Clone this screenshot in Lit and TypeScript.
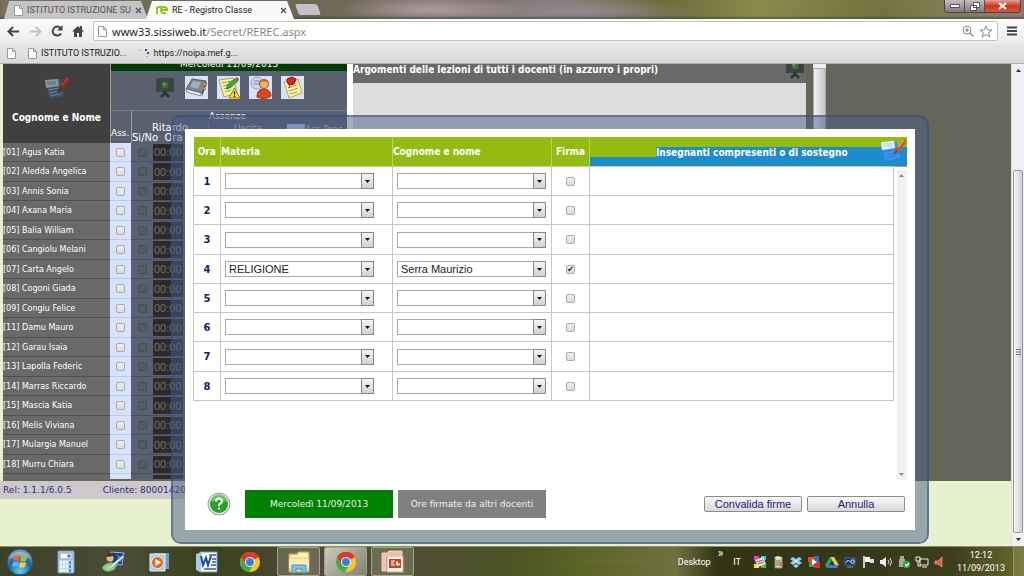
import { LitElement, html, css, svg, nothing } from "lit";
import { customElement } from "lit/decorators.js";

const students = [
  "[01] Agus Katia", "[02] Aledda Angelica", "[03] Annis Sonia", "[04] Axana Maria",
  "[05] Balia William", "[06] Cangiolu Melani", "[07] Carta Angelo", "[08] Cogoni Giada",
  "[09] Congiu Felice", "[11] Damu Mauro", "[12] Garau Isaia", "[13] Lapolla Federic",
  "[14] Marras Riccardo", "[15] Mascia Katia", "[16] Melis Viviana", "[17] Mulargia Manuel",
  "[18] Murru Chiara",
];

const hours = [1, 2, 3, 4, 5, 6, 7, 8].map((n) => ({
  n,
  subject: n === 4 ? "RELIGIONE" : "",
  teacher: n === 4 ? "Serra Maurizio" : "",
  signed: n === 4,
}));

const icon = (w: number, h: number, body: unknown, box = `0 0 ${w} ${h}`) =>
  html`<svg width=${w} height=${h} viewBox=${box} aria-hidden="true">${body}</svg>`;

const pageIcon = icon(9, 11, svg`<path d="M.5.5h5l3 3v7h-8z" fill="#fdfdfd" stroke="#999"/><path d="M5.500.5v3h3" fill="none" stroke="#999"/>`);
const closeIcon = icon(7, 7, svg`<path d="M1 1l5 5M6 1L1 6" stroke="#555" stroke-width="1.400"/>`);

const notePen = (blue: boolean) => icon(28, 26, svg`
  <path d="M2 5l16-2 3 17-14 3z" fill=${blue ? "#3b93f0" : "#3c5366"}/>
  <path d="M2 4l13-1 1 7-13 2z" fill=${blue ? "#eef4ff" : "#8797a3"}/>
  <path d="M4 6h9M4 8h9" stroke=${blue ? "#a8c8ee" : "#5d6f7c"}/>
  <path d="M5 14l11-2M6 17l11-2M7 20l10-2" stroke=${blue ? "#2a7de6" : "#6b8192"}/>
  <path d="M14 17l3-7L25 1l2 1-1 4-7 9z" fill=${blue ? "#c4582a" : "#842c1e"}/>
  <path d="M19 9l6-7" stroke=${blue ? "#f0a040" : "#b5482d"} stroke-width="1.500"/>
  <path d="M14 17l3-6 2 3z" fill=${blue ? "#4a5a86" : "#333c55"}/>`);

const boardIcon = (w = 18, h = 22) => icon(w, h, svg`
  <path d="M1 2h16v12H1z" fill="#34453c" stroke="#3b464b" stroke-width="2"/>
  <circle cx="9" cy="8" r="3.500" fill="#3f6d38"/><circle cx="8" cy="7" r="1.500" fill="#6b9559"/>
  <path d="M9 14v3M9 16l-4 4M9 16l4 4" stroke="#2d3235" stroke-width="2.500"/>`, "0 0 18 22");

const diary = icon(23, 23, svg`
  <path d="M7 3l14 2-4 12L1 13z" fill="#7c8488" stroke="#555b5f"/><path d="M8 5l8 1-3 7-8-2z" fill="#a3acb0"/>
  <path d="M1 13l15 4v3L2 16z" fill="#f3f3f3" stroke="#6b7175" stroke-width=".8"/><path d="M21 5l1 3-5 12v-3z" fill="#4b5053"/>
  <path d="M19 8l3 1M18 12l3 1" stroke="#d89430" stroke-width="2"/>`);
const noteWarn = icon(23, 23, svg`
  <path d="M2 4l14-2 4 15-13 4z" fill="#f6f2a5" stroke="#a7a466"/><path d="M5 7l10-2M6 10l9-2M7 13l7-2M8 16l6-2" stroke="#9b9c6c"/>
  <path d="M9 13l2-5 8-6 2 3-8 7z" fill="#3fa935" stroke="#24741f" stroke-width=".7"/><path d="M18 3l3 2 1-2-2-2z" fill="#d24a33"/>
  <path d="M17.500 12l5.500 10H12z" fill="#ffe32d" stroke="#a27a00"/><path d="M17.500 15.500v3M17.500 19.500v1.500" stroke="#222" stroke-width="1.500"/>`);
const person = icon(23, 23, svg`
  <circle cx="8" cy="7" r="6" fill="#cfd9f3" stroke="#8fa0cc"/><path d="M4 8h8M5 5h6" stroke="#6c83bd"/>
  <path d="M8 21c0-6 3-8 7-8s7 3 7 7c-3 3-10 3-14 1z" fill="#e2451b" stroke="#9c2c10"/>
  <circle cx="15" cy="8" r="4.500" fill="#f3b463" stroke="#a35a1b"/><path d="M10 8c0-6 10-7 10 0-2-3-7-4-10 0z" fill="#c06a24"/>`);
const pinNote = icon(23, 23, svg`
  <path d="M3 6l14-3 4 14-13 5z" fill="#fff0a3" stroke="#c2a64c"/><path d="M7 12l9-3M8 15l9-3M9 18l7-2" stroke="#a8975c"/>
  <path d="M6 3l5-2 4 2-2 5-5 1-2-3z" fill="#d8251d" stroke="#8f120e"/><path d="M9 8l-1 4" stroke="#555"/>`);

const chromeLogo = icon(22, 22, svg`
  <circle cx="11" cy="11" r="10" fill="#f6ca21"/>
  <path d="M11 11L2.300 6A10 10 0 0119.700 6z" fill="#dd3a2c"/><path d="M11 11L2.300 6A10 10 0 0010 21l5-8z" fill="#4aa84b"/>
  <path d="M11 6h8.700a10 10 0 00-17.400 0l4.500 7.500z" fill="#dd3a2c"/>
  <circle cx="11" cy="11" r="5" fill="#f4f4f4"/><circle cx="11" cy="11" r="3.900" fill="#3b7ee0"/>`);
const orb = icon(28, 28, svg`
  <defs><radialGradient id="orb" cx=".5" cy=".85" r=".9"><stop offset="0" stop-color="#5bd0f2"/><stop offset=".5" stop-color="#20639c"/><stop offset="1" stop-color="#93abbd"/></radialGradient></defs>
  <circle cx="14" cy="14" r="13" fill="url(#orb)" stroke="#274c66"/>
  <path d="M3 11a12 12 0 0122 0c-7-3-15-3-22 0z" fill="#fff" opacity=".35"/>
  <path d="M8 8c2-1 4-1 6 0l-1 5c-2-1-4-1-6 0z" fill="#ee6a2c"/><path d="M15 8c2 1 4 1 6 0l-1 5c-2 1-4 1-6 0z" fill="#8fc63d"/>
  <path d="M7 14c2-1 4-1 6 0l-1 5c-2-1-4-1-6 0z" fill="#54b4ea"/><path d="M14 14c2 1 4 1 6 0l-1 5c-2 1-4 1-6 0z" fill="#fccc3c"/>`);
const calc = icon(18, 24, svg`
  <rect x="1" y="1" width="16" height="22" rx="1" fill="#b9d7ec" stroke="#6e9bbb"/><rect x="3" y="3" width="12" height="6" fill="#f5fbff" stroke="#7fa4bd"/>
  <path d="M11 5h2v2h-2z" fill="none" stroke="#456"/>
  ${[0, 1, 2].map((r) => [0, 1, 2, 3].map((c) => svg`<rect x=${3 + c * 3} y=${11 + r * 4} width="2" height="3" fill=${c === 3 ? "#4b8fc4" : "#f2faff"}/>`))}`);
const journal = icon(24, 22, svg`
  <path d="M10 1l13 1-2 12-11-1z" fill="#1d3c87" stroke="#9bb6dd"/><path d="M15 3l6 4-1 5z" fill="#5c86d4"/>
  <circle cx="9" cy="7" r="3.500" fill="#e8ba74"/><path d="M5 6c0-5 8-5 8-1z" fill="#4b3118"/>
  <path d="M1 17c3-6 10-6 16-5l-3 6c-4 3-10 4-13-1z" fill="#8ed08a" stroke="#4e8c63"/><path d="M8 16L22 4l1 2L11 17z" fill="#e7eef8" stroke="#5a7bab" stroke-width=".7"/><path d="M6 18l5-1-3-2z" fill="#f4d160"/>`);
const player = icon(21, 20, svg`
  <path d="M5 1h15v16H5z" fill="#6aa3c4"/><path d="M1 2h15v17H1z" fill="#a6d0e4" stroke="#e6f3f8"/>
  <circle cx="8.500" cy="10.500" r="6" fill="#e96921" stroke="#fbe9dd"/><path d="M6.500 7l5.500 3.500-5.500 3.500z" fill="#fff"/>`);
const word = icon(23, 22, svg`
  <path d="M5 1h17v20H5z" fill="#f7fbff" stroke="#6f93c9"/><path d="M14 4h7M17 8h4M17 11h4M16 14h5M9 18h12" stroke="#3160aa" stroke-width="1.500"/>
  <path d="M1 3l6-2-2 20-4-2z" fill="#a9c7ed"/><path d="M6 5l2 9 3-7 2 7 3-9" fill="none" stroke="#1f4b9c" stroke-width="2"/>`);
const folder = icon(24, 24, svg`
  <path d="M2 4h8l1-2h11v20H2z" fill="#f3dc8f" stroke="#c7a34c"/><path d="M4 6h17M12 4h8" stroke="#fff7ce" stroke-width="1.500"/><path d="M4 3h2" stroke="#4a9b40" stroke-width="2"/>
  <path d="M2 9h20v9H2z" fill="#f8eab2"/><path d="M5 23v-8h14v8h-4v-4H9v4z" fill="#7dbfe6" stroke="#4a93c4"/>`);
const slides = icon(24, 23, svg`
  <path d="M1 3h5l2-2h13v5H5v15H1z" fill="#f4bda9" stroke="#fbe5db" stroke-width=".8"/><path d="M6 6h16v16H6z" fill="#fff7f3" stroke="#e2a18c"/>
  <path d="M8 9h12v9H8z" fill="#c9421f"/><path d="M10 11h4M10 13h3M10 15h4" stroke="#fff" stroke-width="1.200"/><circle cx="17" cy="13.500" r="2.200" fill="#fff"/><path d="M17 13.500v-3h3v3z" fill="#c9421f"/>`);

const tray = [
  svg`<path d="M1 1h12v12H1z" fill="#3c3c3c"/><path d="M1 1h5v4H1z" fill="#e43bd0"/><path d="M8 1h5v4H8z" fill="#21d9e4"/><path d="M1 9h5v4H1z" fill="#f3ea2a"/><path d="M8 9h5v4H8z" fill="#2ec94a"/><path d="M2 5l8-3 3 7-8 3z" fill="#e8dfe0"/><path d="M4 7l6-2M5 9l6-2" stroke="#b84c50"/>`,
  svg`<path d="M4 2h7v11H4z" fill="#d9d3bd" stroke="#8c8670"/><path d="M3 3l4-2 4 2" fill="#f0e9cf"/><path d="M5 6h5M5 8h5M5 10h5" stroke="#77715c"/><path d="M9 8h3v3H9z" fill="#c66a37"/>`,
  svg`<path d="M4 2l3 2-3 2-3-2zm6 0l3 2-3 2-3-2zM4 6l3 2-3 2-3-2zm6 0l3 2-3 2-3-2zM7 9l3 2-3 2-3-2z" fill="#8fd6ff"/><path d="M4 6l3-2 3 2-3 2z" fill="#dff3ff"/>`,
  svg`<path d="M1 2h6v5H1z" fill="#e34b2f"/><path d="M7 1h5v6H7z" fill="#2e73c9"/><path d="M2 7h5v5H2z" fill="#3ca54c"/><path d="M7 7h6v6H7z" fill="#d5362c"/><path d="M5 4l5 3-5 3z" fill="#fff"/>`,
  svg`<path d="M5 2h4l5 8h-4z" fill="#f4cd33"/><path d="M5 2L0 10l2 3 5-8z" fill="#2da562"/><path d="M4 10h10l-2 3H2z" fill="#3d7de0"/>`,
  svg`<path d="M2 3h10v7H2z" fill="#1a2e5a" stroke="#4a689a"/><path d="M3 8l2-3 2 2M8 5h3v3H8z" stroke="#bfe0ff" fill="none"/><path d="M4 12h6" stroke="#8397b0"/>`,
  svg`<path d="M3 1v12" stroke="#fff" stroke-width="1.500"/><path d="M4 2h5v5H4z" fill="#fff"/><path d="M9 4h4v4H9z" fill="#ddd"/>`,
  svg`<path d="M1 5h2l4-3v10L3 9H1z" fill="#eee"/><path d="M9 5q2 2 0 4M11 3q3 4 0 8" stroke="#ddd" fill="none"/>`,
  svg`<path d="M3 1h4v3H3zM2 4h6v8H2z" fill="#a5a9a2"/><circle cx="9.500" cy="9.500" r="3.800" fill="#2fa336"/><path d="M8 9.500l1.500 1.500L12 8" stroke="#fff" fill="none" stroke-width="1.300"/>`,
  svg`<path d="M5 4h8v6H5zM7 12h5" fill="#30361f" stroke="#eee"/><path d="M1 2h4v4H1zM3 6v5h3" fill="none" stroke="#eee"/>`,
  svg`<path d="M2 6h3l4-4v10L5 9H2z" fill="#e05a3a" stroke="#ffb39a" stroke-width=".6"/>`,
];

@customElement("app-root")
export class AppRoot extends LitElement {
  static styles = css`
    :host { display: flex; flex-direction: column; height: 100vh; overflow: hidden; font-family: "DejaVu Sans", sans-serif; font-size: 9px; color: #fff; --slate: #596070; --cream: #e7f0cf; }
    * { box-sizing: border-box; }
    svg { display: block; flex: none; }
    button, input, select { font: inherit; margin: 0; }
    button { padding: 0; border: 0; background: none; color: inherit; display: flex; align-items: center; justify-content: center; }
    a { color: inherit; text-decoration: none; }
    .grow { flex: 1; }
    .chrome { font-family: Roboto, sans-serif; color: #222; }

    .tabs { display: flex; height: 19px; padding-left: 4px; background:
      radial-gradient(ellipse 90px 14px at 42% 50%, rgba(190,165,180,.8), transparent),
      radial-gradient(ellipse 130px 14px at 56% 60%, rgba(150,135,145,.9), transparent),
      linear-gradient(90deg, #77705a 0, #6e6853 30%, #7b7062 42%, #847b78 55%, #6d6b38 65%, #8b8a4c 74%, #75723d 86%, #817d54 92%, #8f7a78 100%); box-shadow: inset 0 -2px 2px rgba(60,60,50,.5); }
    .tab { display: flex; align-items: center; gap: 4px; width: 144px; height: 18px; align-self: flex-end; padding: 0 7px 0 10px; font-size: 9px; white-space: nowrap; background: #c6c3c5; clip-path: polygon(0 100%, 5px 0, 137px 0, 100% 100%); color: #555; }
    .tab span { flex: 1; }
    .tab.active { width: 148px; margin-left: -2px; background: #f9f9f9; color: #222; clip-path: polygon(0 100%, 6px 0, 141px 0, 100% 100%); }
    .newtab { width: 22px; height: 11px; margin: 4px 0 0 3px; background: #c6c0c8; border-radius: 2px; transform: skewX(20deg); }
    .win { display: flex; height: 13px; margin-right: 3px; border: 1px solid #4d4246; border-top: 0; border-radius: 0 0 4px 4px; overflow: hidden; }
    .win button { width: 20px; background: linear-gradient(#c8bdc1, #83777d); border-right: 1px solid #5b5054; }
    .win .x { width: 35px; border: 0; background: linear-gradient(#e0a397, #c8391f 50%, #d35a3c); }

    .bar { display: flex; align-items: center; height: 24px; gap: 9px; padding: 0 7px; background: linear-gradient(#fbfbfb, #ececec); }
    .url { flex: 1; display: flex; align-items: center; gap: 5px; height: 20px; padding: 0 4px; border: 1px solid #c4c4c4; background: #fff; border-radius: 2px; }
    .addr { flex: 1; font-family: "Noto Sans", sans-serif; font-size: 11px; color: #888; }
    .addr b { font-weight: 400; color: #222; }
    .marks { display: flex; align-items: center; height: 21px; padding-left: 7px; background: linear-gradient(#e7e7e7, #dadada); border-bottom: 1px solid #aaa; font-size: 9px; }
    .marks a { display: flex; align-items: center; gap: 4px; margin-right: 12px; }

    .view { flex: 1; min-height: 0; display: flex; position: relative; overflow: hidden; background: var(--cream); }
    .page { flex: 1; display: flex; flex-direction: column; min-width: 0; }
    .top { display: flex; height: 417px; background: #64665a; border-left: 3px solid var(--cream); overflow: hidden; }
    .register { width: 344px; height: 415px; overflow: hidden; background: var(--slate); }
    .heads { display: flex; height: 79px; }
    .namehead { width: 107px; background: #404040; display: flex; flex-direction: column; align-items: center; padding-top: 12px; gap: 9px; font: bold 10px/14px "DejaVu Sans Condensed", "DejaVu Sans", sans-serif; }
    .daypanel { flex: 1; border-left: 1px solid #999; }
    .day { height: 7px; overflow: hidden; background: #033b07; text-align: center; }
    .day span { display: block; font-size: 9px; line-height: 12px; margin-top: -6px; }
    .tools { display: flex; gap: 9px; height: 33px; align-items: center; padding-left: 42px; }
    .tools button { width: 23px; height: 23px; background: #d8e3fb; }
    .tools .plain { background: none; }
    .cols { display: grid; grid-template-columns: 21px 77px 78px 1fr; height: 33px; margin-top: 6px; line-height: 10px; border-top: 1px solid #777c8a; }
    .absent { grid-row: 1 / 3; padding-top: 17px; border-right: 1px solid #9a9fab; }
    .title { grid-column: 2 / 5; height: 12px; padding-left: 77px; }
    .late { text-align: center; height: 20px; border-right: 1px solid #777c8a; font-size: 10px; }
    .late div { text-align: left; }
    .out { text-align: center; color: #c5cad6; }
    .prev { display: flex; align-items: center; color: #c5cad6; height: 12px; }
    .prev i { width: 18px; height: 10px; background: #b7c9ef; }
    .list { width: 100%; height: 351px; border-collapse: collapse; table-layout: fixed; }
    .list td { padding: 0; border-bottom: 1px solid #505050; overflow: hidden; white-space: nowrap; }
    .list .who { width: 107px; background: #696969; font-size: 8px; }
    .list .ass { width: 21px; background: #d5e3fd; border-bottom-color: #b9cbed; text-align: center; }
    .list .sn { width: 22px; text-align: center; border-color: #4a5060; }
    .list .hr { border-color: #4a5060; }
    .time { display: block; width: 30px; height: 17px; border: 0; padding: 0 0 0 1px; background: #2b2b2d; color: #77705e; font: 11px "Liberation Sans", sans-serif; }
    .cb { appearance: none; display: grid; place-items: center; width: 9px; height: 9px; margin: 0 auto; border: 1px solid #aaa; border-radius: 2px; background: linear-gradient(#eee, #dcdcdc); }
    .cb.dim { background: #555b66; border-color: #474c56; }
    .cb:checked::before { content: "✔"; font: 8px/7px "DejaVu Sans", sans-serif; color: #222; }

    .gap { width: 6px; background: #fff; }
    .topics { width: 453px; background: #ddd; }
    .topics h2 { display: flex; justify-content: space-between; align-items: flex-start; height: 19px; margin: 0; overflow: hidden; background: #696969; font: bold 10px/11px "DejaVu Sans Condensed", "DejaVu Sans", sans-serif; }
    .topics svg { margin: -6px 2px 0 0; }
    .strip { width: 13px; margin-left: 7px; padding-top: 4px; background: #eee; }
    .strip div { height: 100%; background: linear-gradient(90deg, #f2f2f2, #c5c6cc); border: 1px solid #aaa; }
    .foot { width: 700px; height: 18px; display: flex; align-items: center; padding-left: 3px; gap: 31px; background: #cdc9cb; color: #2d2c78; font-size: 9px; }
    .scroll { width: 13px; display: flex; flex-direction: column; align-items: center; padding: 5px 0; background: #f0f0f0; border-left: 1px solid #ddd; }
    .scroll .space { flex: none; height: 98px; }
    .thumb { flex: 1; width: 10px; margin-bottom: 5px; border: 1px solid #999; border-radius: 2px; background: linear-gradient(90deg, #f5f5f5, #d0d0d2); display: grid; place-items: center; }

    .frame { position: absolute; left: 171px; right: 95px; top: 51px; height: 429px; padding: 12px; border: 2px solid rgba(60,78,125,.75); border-radius: 10px; background: rgba(72,93,129,.5); background-clip: padding-box; }
    .dialog { height: 100%; display: flex; flex-direction: column; padding: 8px 8px 3px; background: #fff; color: #1d1a62; }
    .hours { width: 100%; height: 343px; border-collapse: collapse; table-layout: fixed; }
    .hours th { height: 29px; padding: 0; text-align: left; color: #fff; background: #94bb0f; border-right: 1px solid #b8d45c; font: bold 10px/11px "DejaVu Sans Condensed", "DejaVu Sans", sans-serif; }
    .hours .mid { text-align: center; }
    .hours .sel { background: linear-gradient(#1e8bcd, #1e8bcd) 0 100% / 100% 9px no-repeat #94bb0f; border: 0; }
    .selrow { display: flex; height: 29px; align-items: flex-end; }
    .selrow .lead { width: 66px; }
    .selrow .lit { flex: 1; display: flex; justify-content: space-between; height: 19px; background: #1e8bcd; }
    .selrow svg { margin-top: -9px; }
    .hours td { height: 29px; padding: 0 4px; border: 1px solid #c6c6c6; }
    .hours tr:nth-child(4n+3) td { height: 30px; }
    .hours td.num { padding: 0; text-align: center; font-weight: bold; font-size: 10px; }
    .hours tr.fill td { border: 0; height: auto; }
    .hours td.bar2 { padding: 3px 0 0 3px; border: 0; height: auto; }
    .track { display: flex; flex-direction: column; align-items: center; justify-content: space-between; height: 100%; padding: 4px 0; background: #f1f1f1; }
    .pick { display: grid; width: 149px; height: 16px; }
    .pick select { grid-area: 1 / 1; appearance: none; width: 100%; padding: 0 3px; border: 1px solid #a9a9a9; border-radius: 0; background: #fff; color: #222; font: 11px/14px "Liberation Sans", sans-serif; }
    .pick span { grid-area: 1 / 1; justify-self: end; width: 13px; display: grid; place-items: center; border: 1px solid #888; background: linear-gradient(#f4f4f4, #d2d2d2); pointer-events: none; }
    .actions { flex: 1; display: flex; align-items: center; padding: 0 2px 0 14px; gap: 5px; }
    .chip { width: 148px; height: 28px; background: #008000; color: #e9f5e9; font-size: 9px; }
    .chip.grey { background: #808080; color: #eee; }
    .act { width: 98px; height: 16px; border: 1px solid #8b8b8b; border-radius: 2px; background: linear-gradient(#f8f8f8, #d9d9d9); color: #27217d; font: 11px/14px "Liberation Sans", sans-serif; }
    .help { margin-right: 9px; }

    .task { display: flex; align-items: center; height: 30px; padding-left: 6px; border-top: 1px solid #8a8d70; font-family: Roboto, sans-serif; font-size: 9px; background:
      radial-gradient(ellipse at 61% 50%, rgba(110,115,40,.8), transparent 8%),
      linear-gradient(90deg, #3c4024 0, #4c4c38 12%, #38421a 20%, #4e4a38 30%, #4e4f31 44%, #4c5423 50%, #5c6425 57%, #6f7140 66%, #343514 70%, #33361a 80%, #3d3e1c 93%, #69692d 100%); }
    .apps { display: flex; align-items: center; }
    .apps button { height: 29px; }
    .apps .run { width: 43px; margin-right: 4px; border: 1px solid #a2a38f; border-radius: 2px; background: rgba(200,200,180,.25); }
    .apps .on { background: linear-gradient(135deg, rgba(235,235,225,.8), rgba(180,180,165,.5)); }
    .tray { display: flex; gap: 4px; margin-left: 12px; }
    .clock { width: 64px; margin-left: 2px; text-align: center; line-height: 13px; }
    .show { width: 11px; height: 29px; border-left: 1px solid #8f8f6b; background: rgba(200,200,150,.2); }
    .more { align-self: flex-start; margin: 0 10px 0 7px; line-height: 12px; font-size: 12px; }
    .orb { width: 28px; }
    .calc { width: 64px; }
    .journal { width: 30px; }
    .player { width: 62px; }
    .word { width: 32px; }
    .web { width: 55px; }
    .c-hour { width: 27px; }
    .c-subject { width: 172px; }
    .c-teacher { width: 159px; }
    .c-sign { width: 38px; }
    .c-bar { width: 14px; }
  `;

  private arrow(up: boolean, color = "#333") {
    return icon(5, 3, svg`<path d=${up ? "M0 3h5L2.500 0z" : "M0 0h5L2.500 3z"} fill=${color}/>`);
  }

  private pick(label: string, value: string) {
    return html`<div class="pick"><select aria-label=${label}><option>${value}</option></select><span>${this.arrow(false, "#111")}</span></div>`;
  }

  private browser() {
    return html`
      <div class="tabs chrome">
        <div class="tab">${pageIcon}<span>ISTITUTO ISTRUZIONE SU</span>${closeIcon}</div>
        <div class="tab active">
          ${icon(12, 10, svg`<path d="M1 9V3q2-2 5-1M5 5h6q0-3-3-3T5 5q0 4 5 3" fill="none" stroke="#8ec31f" stroke-width="2"/>`)}
          <span>RE - Registro Classe</span>${closeIcon}
        </div>
        <div class="newtab"></div><div class="grow"></div>
        <div class="win">
          <button aria-label="Riduci">${icon(10, 4, svg`<path d="M.5.5h9v3h-9z" fill="#fff" stroke="#555"/>`)}</button>
          <button aria-label="Ripristina">${icon(10, 9, svg`<path d="M3.500.5h6v5h-6zM.5 3.500h6v5h-6z" fill="#fff" stroke="#555"/><path d="M3 5h1v1H3z" fill="#555"/>`)}</button>
          <button class="x" aria-label="Chiudi">${icon(9, 8, svg`<path d="M1 1l7 6M8 1L1 7" stroke="#fff" stroke-width="2.200"/>`)}</button>
        </div>
      </div>
      <div class="bar chrome">
        <button aria-label="Indietro">${icon(13, 11, svg`<path d="M12 5.500H2M6 1L1.500 5.500 6 10" fill="none" stroke="#444" stroke-width="2"/>`)}</button>
        <button aria-label="Avanti">${icon(13, 11, svg`<path d="M1 5.500h10M7 1l4.500 4.500L7 10" fill="none" stroke="#c2c2c2" stroke-width="2"/>`)}</button>
        <button aria-label="Ricarica">${icon(12, 12, svg`<path d="M10 8.500A4.500 4.500 0 119.500 3" fill="none" stroke="#444" stroke-width="2"/><path d="M11.500 0v5.500H6z" fill="#444"/>`)}</button>
        <button aria-label="Pagina iniziale">${icon(12, 12, svg`<path d="M0 6.500L6 1l2 2V1h2v3.500l2 2h-2V12H7V8H5v4H2V6.500z" fill="#444"/>`)}</button>
        <div class="url">${pageIcon}
          <div class="addr"><b>www33.sissiweb.it</b>/Secret/REREC.aspx</div>
          ${icon(12, 12, svg`<circle cx="5" cy="5" r="4" fill="none" stroke="#888"/><path d="M8 8l3.500 3.500M3 5h4M5 3v4" stroke="#888" stroke-width="1.200"/>`)}
          ${icon(14, 13, svg`<path d="M7 1l1.800 4H13l-3.300 2.600L11 12 7 9.500 3 12l1.300-4.400L1 5h4.200z" fill="none" stroke="#888"/>`)}
        </div>
        <button aria-label="Menu">${icon(10, 10, svg`<path d="M0 1.500h10M0 5h10M0 8.500h10" stroke="#444" stroke-width="2"/>`)}</button>
      </div>
      <div class="marks chrome">
        <a href="#" aria-label="Pagina">${pageIcon}</a>
        <a href="#">${pageIcon}ISTITUTO ISTRUZIO...</a>
        <a href="#">${icon(11, 11, svg`<path d="M0 2h3v1H0z" fill="#e4c430"/><path d="M6 1h2v2H6zM8 4h2v2H8z" fill="#3447a8"/><path d="M7 8h2v1H7z" fill="#d8b820"/>`)}https://noipa.mef.g...</a>
      </div>`;
  }

  private register() {
    return html`
      <div class="register">
        <div class="heads">
          <div class="namehead">${notePen(false)}<span>Cognome e Nome</span></div>
          <div class="daypanel">
            <div class="day"><span>Mercoledì 11/09/2013</span></div>
            <div class="tools">
              <button class="plain" aria-label="Lavagna">${boardIcon()}</button>
              <button aria-label="Registro">${diary}</button>
              <button aria-label="Note">${noteWarn}</button>
              <button aria-label="Alunno">${person}</button>
              <button aria-label="Promemoria">${pinNote}</button>
            </div>
            <div class="cols">
              <div class="absent">Ass.</div>
              <div class="title">Assenze</div>
              <div class="late">Ritardo<div>Si/No&nbsp; Ora</div></div>
              <div class="out">Uscita</div>
              <div class="prev"><i></i>Ass.Prec.</div>
            </div>
          </div>
        </div>
        <table class="list">
          ${[...students, ""].map((s) => html`<tr>
            <td class="who">${s}</td>
            <td class="ass">${s ? html`<input class="cb" type="checkbox" aria-label="Assente ${s}">` : nothing}</td>
            <td class="sn">${s ? html`<input class="cb dim" type="checkbox" aria-label="Ritardo ${s}">` : nothing}</td>
            <td class="hr"><input class="time" aria-label="Ora ${s}" .value=${s ? "00:00" : ""}></td>
          </tr>`)}
        </table>
      </div>`;
  }

  private dialog() {
    return html`
      <div class="frame"><div class="dialog" role="dialog">
        <table class="hours">
          <colgroup><col class="c-hour"><col class="c-subject"><col class="c-teacher"><col class="c-sign"><col><col class="c-bar"></colgroup>
          <thead><tr>
            <th class="mid">Ora</th><th>Materia</th><th>Cognome e nome</th><th class="mid">Firma</th>
            <th class="sel" colspan="2"><div class="selrow"><span class="lead"></span><div class="lit"><span>Insegnanti compresenti o di sostegno</span>${notePen(true)}</div></div></th>
          </tr></thead>
          <tbody>
            ${hours.map((h, i) => html`<tr>
              <td class="num">${h.n}</td>
              <td>${this.pick(`Materia ${h.n}`, h.subject)}</td>
              <td>${this.pick(`Docente ${h.n}`, h.teacher)}</td>
              <td><input class="cb" type="checkbox" aria-label="Firma ${h.n}" .checked=${h.signed}></td>
              <td></td>
              ${i === 0 ? html`<td class="bar2" rowspan="9"><div class="track">${this.arrow(true, "#888")}${this.arrow(false, "#888")}</div></td>` : nothing}
            </tr>`)}
            <tr class="fill"><td colspan="5"></td></tr>
          </tbody>
        </table>
        <div class="actions">
          <button class="help" aria-label="Aiuto">${icon(24, 24, svg`<circle cx="12" cy="12" r="11" fill="#e4e4e4" stroke="#999"/><circle cx="12" cy="12" r="9" fill="#2f9e2a"/><path d="M4 10a8 8 0 0116 0q-8-3-16 0z" fill="#7fce76" opacity=".7"/><path d="M9 9.500q0-3 3-3t3 2.700q0 1.600-1.800 2.300-1.200.6-1.200 2.500" fill="none" stroke="#fff" stroke-width="2"/><path d="M11 15.500h2v2h-2z" fill="#fff"/>`)}</button>
          <button class="chip">Mercoledì 11/09/2013</button>
          <button class="chip grey">Ore firmate da altri docenti</button>
          <div class="grow"></div>
          <button class="act">Convalida firme</button>
          <button class="act">Annulla</button>
        </div>
      </div></div>`;
  }

  render() {
    return html`
      ${this.browser()}
      <div class="view">
        <div class="page">
          <div class="top">
            ${this.register()}
            <div class="gap"></div>
            <div class="topics"><h2><span>Argomenti delle lezioni di tutti i docenti (in azzurro i propri)</span>${boardIcon()}</h2></div>
            <div class="strip"><div></div></div>
          </div>
          <div class="foot"><span>Rel: 1.1.1/6.0.5</span><span>Cliente: 800014209</span></div>
        </div>
        <div class="scroll">${this.arrow(true)}<div class="space"></div>
          <div class="thumb">${icon(5, 6, svg`<path d="M0 .5h5M0 3h5M0 5.500h5" stroke="#777"/>`)}</div>${this.arrow(false)}</div>
        ${this.dialog()}
      </div>
      <div class="task">
        <div class="apps">
          <button class="orb" aria-label="Start">${orb}</button>
          <button class="calc" aria-label="Calcolatrice">${calc}</button>
          <button class="journal" aria-label="Journal">${journal}</button>
          <button class="player" aria-label="Media Player">${player}</button>
          <button class="word" aria-label="Word">${word}</button>
          <button class="web" aria-label="Chrome">${chromeLogo}</button>
          <button class="run" aria-label="Esplora risorse">${folder}</button>
          <button class="run on" aria-label="Chrome aperto">${chromeLogo}</button>
          <button class="run" aria-label="PowerPoint">${slides}</button>
        </div>
        <div class="grow"></div>
        <span>Desktop</span><span class="more">»</span><span>IT</span>
        <div class="tray">${tray.map((t) => icon(14, 14, t))}</div>
        <div class="clock">12:12<br>11/09/2013</div>
        <button class="show" aria-label="Mostra desktop"></button>
      </div>`;
  }
}
